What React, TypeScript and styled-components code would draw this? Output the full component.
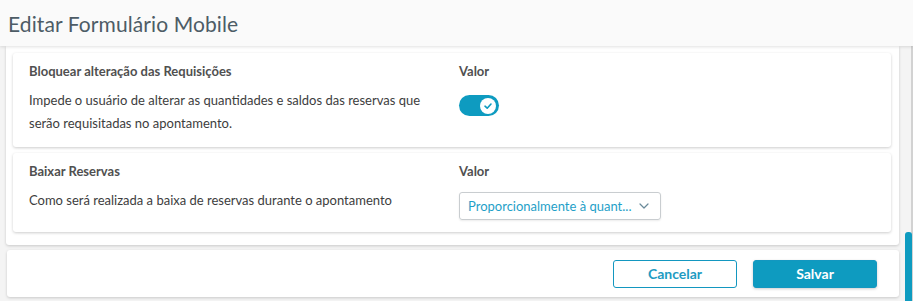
import React from "react";
import styled, { createGlobalStyle } from "styled-components";

const Global = createGlobalStyle`
  html, body { margin: 0; padding: 0; }
  body {
    background: #f4f4f4;
    font-family: Lato, "Noto Sans", sans-serif;
    overflow: hidden;
  }
  * { box-sizing: border-box; }
`;

const Page = styled.div`
  width: 913px;
  height: 301px;
  display: flex;
  flex-direction: column;
  background: #f4f4f4;
  overflow: hidden;
  position: relative;
`;

const Header = styled.header`
  height: 46px;
  flex: none;
  background: #fafafa;
  padding: 0 8px;
  display: flex;
  align-items: center;
  box-shadow: 0 1px 3px rgba(0, 0, 0, 0.12);
  position: relative;
  z-index: 2;
`;

const Title = styled.h1`
  margin: 0;
  font-size: 21px;
  font-weight: 400;
  color: #4d5c66;
  letter-spacing: 0.1px;
`;

const Body = styled.div`
  flex: 1;
  display: flex;
  min-height: 0;
`;

const Main = styled.div`
  flex: 1;
  display: flex;
  flex-direction: column;
  gap: 5px;
  padding: 0 0 0 6px;
`;

const Panel = styled.section`
  background: #fff;
  box-shadow: 0 1px 3px rgba(0, 0, 0, 0.18);
  border-radius: 0 0 3px 3px;
  padding: 7px 8px 13px 7px;
  display: flex;
  flex-direction: column;
  gap: 6px;
`;

const Card = styled.div<{ $h: number }>`
  background: #fff;
  border-radius: 3px;
  box-shadow: 0 1px 3px rgba(0, 0, 0, 0.2);
  height: ${(p) => p.$h}px;
  padding: 9px 16px 0 16px;
  display: grid;
  grid-template-columns: 430px 1fr;
`;

const Col = styled.div`
  display: flex;
  flex-direction: column;
`;

const CardTitle = styled.div`
  font-size: 13px;
  font-weight: 700;
  color: #505050;
  line-height: 18px;
  margin-bottom: 9px;
`;

const Desc = styled.div`
  font-size: 13px;
  color: #3d3d3d;
  line-height: 23px;
  padding-right: 20px;
`;

const Toggle = styled.div`
  width: 40px;
  height: 21px;
  border-radius: 11px;
  background: #0e9bc0;
  position: relative;
  margin-top: 6px;
`;

const Knob = styled.div`
  position: absolute;
  right: 3px;
  top: 2.5px;
  width: 16px;
  height: 16px;
  border-radius: 50%;
  background: #fff;
  display: flex;
  align-items: center;
  justify-content: center;
`;

const Select = styled.div`
  width: 202px;
  height: 28px;
  border: 1px solid #c9cdd0;
  border-radius: 3px;
  box-shadow: 0 1px 2px rgba(0, 0, 0, 0.08);
  display: flex;
  align-items: center;
  justify-content: space-between;
  gap: 4px;
  padding: 0 11px 0 8px;
  font-size: 13px;
  color: #1f9fc8;
  margin-top: 3px;
`;

const SelectText = styled.span`
  white-space: nowrap;
`;

const Footer = styled.footer`
  background: #fff;
  box-shadow: 0 1px 3px rgba(0, 0, 0, 0.18);
  border-radius: 3px;
  height: 47px;
  margin-left: 1px;
  padding: 0 22px 0 0;
  display: flex;
  align-items: center;
  justify-content: flex-end;
  gap: 16px;
`;

const Button = styled.button<{ $primary?: boolean }>`
  width: 124px;
  height: 28px;
  border-radius: 3px;
  font-family: Lato, "Noto Sans", sans-serif;
  font-size: 14px;
  font-weight: 700;
  cursor: pointer;
  border: 1px solid #1397c0;
  background: ${(p) => (p.$primary ? "#0e9bc0" : "#fff")};
  color: ${(p) => (p.$primary ? "#fff" : "#1e9bc2")};
  box-shadow: ${(p) => (p.$primary ? "0 1px 3px rgba(0,0,0,0.2)" : "none")};
`;

const Scroll = styled.div`
  width: 8px;
  flex: none;
  margin-left: 6px;
  position: relative;
  border-right: 2px solid #d2d2d2;
  background: #f4f4f4;
`;

const Thumb = styled.div`
  position: absolute;
  left: 0;
  right: -1px;
  top: 186px;
  bottom: 0;
  background: #0e9bc0;
  border-radius: 3px 3px 0 0;
`;

export default function App() {
  return (
    <Page>
      <Global />
      <Header>
        <Title>Editar Formulário Mobile</Title>
      </Header>
      <Body>
        <Main>
          <Panel>
            <Card $h={94}>
              <Col>
                <CardTitle>Bloquear alteração das Requisições</CardTitle>
                <Desc>
                  Impede o usuário de alterar as quantidades e saldos das reservas que serão
                  requisitadas no apontamento.
                </Desc>
              </Col>
              <Col>
                <CardTitle>Valor</CardTitle>
                <Toggle>
                  <Knob>
                    <svg width="10" height="10" viewBox="0 0 10 10">
                      <path
                        d="M2 5.2 L4.2 7.2 L8 3"
                        fill="none"
                        stroke="#0e9bc0"
                        strokeWidth="1.6"
                        strokeLinecap="round"
                        strokeLinejoin="round"
                      />
                    </svg>
                  </Knob>
                </Toggle>
              </Col>
            </Card>
            <Card $h={79}>
              <Col>
                <CardTitle>Baixar Reservas</CardTitle>
                <Desc>Como será realizada a baixa de reservas durante o apontamento</Desc>
              </Col>
              <Col>
                <CardTitle>Valor</CardTitle>
                <Select>
                  <SelectText>Proporcionalmente à quant...</SelectText>
                  <svg width="10" height="6" viewBox="0 0 10 6">
                    <path
                      d="M1 1 L5 5 L9 1"
                      fill="none"
                      stroke="#6a8a9a"
                      strokeWidth="1.2"
                      strokeLinecap="round"
                      strokeLinejoin="round"
                    />
                  </svg>
                </Select>
              </Col>
            </Card>
          </Panel>
          <Footer>
            <Button>Cancelar</Button>
            <Button $primary>Salvar</Button>
          </Footer>
        </Main>
        <Scroll>
          <Thumb />
        </Scroll>
      </Body>
    </Page>
  );
}
